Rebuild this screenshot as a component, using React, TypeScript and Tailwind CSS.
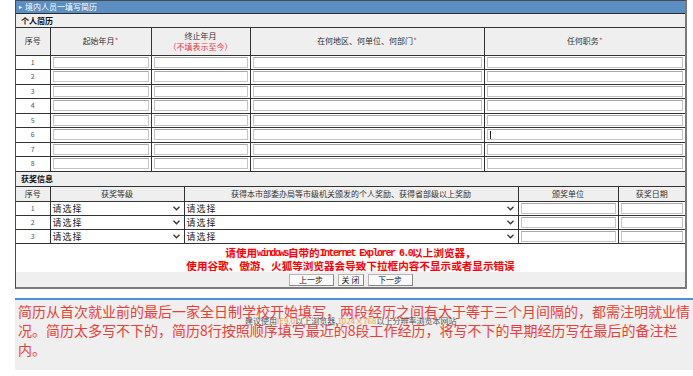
import React from "react";

const resumeRows = [1, 2, 3, 4, 5, 6, 7, 8];
const awardRows = [1, 2, 3];

function Field() {
  return <div className="h-[11px] w-full border border-[#c4c4c4] border-t-[#a8a8a8] bg-white" />;
}

function Chevron() {
  return (
    <svg width="7" height="5" viewBox="0 0 7 5" className="shrink-0">
      <path d="M0.5 0.8 L3.5 3.8 L6.5 0.8" fill="none" stroke="#333" strokeWidth="1.3" />
    </svg>
  );
}

function FakeSelect() {
  return (
    <div className="flex h-[12px] w-full items-center justify-between bg-white pl-[1px] pr-[2px] text-[9px] leading-none tracking-[1px] text-[#222]">
      <span>请选择</span>
      <Chevron />
    </div>
  );
}

export default function App() {
  return (
    <div className="relative h-[376px] w-[693px] overflow-hidden bg-white font-['Noto_Sans_CJK_SC',sans-serif]">
      {/* form frame */}
      <div className="ml-[15px] w-[672px] border border-[#4a4a4a] border-r-2 border-r-[#7a7a7a] border-b-2 border-b-[#7a7a7a]">
        <div className="flex h-[13px] items-center gap-[3px] border-b border-[#2d2d2d] bg-[#5b8ec3] pl-[3px] text-[8px] leading-none text-white">
          <span className="text-[6px]">▸</span>
          <span>境内人员一填写简历</span>
        </div>

        <div className="flex h-[14px] items-center border-b border-[#333] bg-[#efefef] pl-[5px] text-[8px] font-bold leading-none text-[#111]">
          个人简历
        </div>

        <table className="w-full table-fixed border-collapse text-[8px] leading-none text-[#333]">
          <colgroup>
            <col className="w-[34px]" />
            <col className="w-[101px]" />
            <col className="w-[99px]" />
            <col className="w-[234px]" />
            <col />
          </colgroup>
          <thead>
            <tr className="h-[27px] bg-[#efefef]">
              <th className="border-r border-b border-[#333] font-normal">序号</th>
              <th className="border-r border-b border-[#333] font-normal">
                起始年月<span className="text-[#ff3355]">*</span>
              </th>
              <th className="border-r border-b border-[#333] font-normal">
                <div>终止年月</div>
                <div className="mt-[3px] text-[#e8383d]">（不填表示至今）</div>
              </th>
              <th className="border-r border-b border-[#333] font-normal">
                在何地区、何单位、何部门<span className="text-[#ff3355]">*</span>
              </th>
              <th className="border-b border-[#333] font-normal">
                任何职务<span className="text-[#ff3355]">*</span>
              </th>
            </tr>
          </thead>
          <tbody>
            {resumeRows.map((n) => (
              <tr key={n} className="h-[14.5px]">
                <td className="border-r border-b border-[#333] text-center text-[7px] text-[#555]">{n}</td>
                <td className="border-r border-b border-[#333] px-[2px]"><Field /></td>
                <td className="border-r border-b border-[#333] px-[2px]"><Field /></td>
                <td className="border-r border-b border-[#333] px-[2px]"><Field /></td>
                <td className="border-b border-[#333] px-[2px]">
                  {n === 6 ? (
                    <div className="flex h-[11px] w-full items-center border border-[#c4c4c4] border-t-[#a8a8a8] bg-white pl-[2px]">
                      <div className="h-[8px] w-px bg-[#222]" />
                    </div>
                  ) : (
                    <Field />
                  )}
                </td>
              </tr>
            ))}
          </tbody>
        </table>

        <div className="flex h-[15px] items-center border-b border-[#333] bg-[#efefef] pl-[5px] text-[8px] font-bold leading-none text-[#111]">
          获奖信息
        </div>

        <table className="w-full table-fixed border-collapse text-[8px] leading-none text-[#333]">
          <colgroup>
            <col className="w-[34px]" />
            <col className="w-[134px]" />
            <col className="w-[334px]" />
            <col className="w-[100px]" />
            <col />
          </colgroup>
          <thead>
            <tr className="h-[15px] bg-[#efefef]">
              <th className="border-r border-b border-[#333] font-normal">序号</th>
              <th className="border-r border-b border-[#333] font-normal">获奖等级</th>
              <th className="border-r border-b border-[#333] font-normal">
                获得本市部委办局等市级机关颁发的个人奖励、获得省部级以上奖励
              </th>
              <th className="border-r border-b border-[#333] font-normal">颁奖单位</th>
              <th className="border-b border-[#333] font-normal">获奖日期</th>
            </tr>
          </thead>
          <tbody>
            {awardRows.map((n) => (
              <tr key={n} className="h-[14px]">
                <td className="border-r border-b border-[#333] text-center text-[7px] text-[#555]">{n}</td>
                <td className="border-r border-b border-[#333] pl-[1px] pr-[2px]"><FakeSelect /></td>
                <td className="border-r border-b border-[#333] pl-[1px] pr-[2px]"><FakeSelect /></td>
                <td className="border-r border-b border-[#333] px-[2px]"><Field /></td>
                <td className="border-b border-[#333] px-[2px]"><Field /></td>
              </tr>
            ))}
          </tbody>
        </table>

        {/* browser warning */}
        <div className="bg-white pt-[3px] text-center text-[10.6px] font-bold text-[#ff0000]">
          <div className="flex h-[13px] items-center justify-center leading-none">
            请使用
            <span className="font-['Liberation_Mono',monospace] text-[10px] leading-none tracking-[-1.6px]">windows</span>
            自带的
            <span className="font-['Liberation_Mono',monospace] text-[10px] leading-none tracking-[-1.6px]">Internet Explorer 6.0</span>
            以上浏览器，
          </div>
          <div className="flex h-[12px] items-center justify-center leading-none">
            使用谷歌、傲游、火狐等浏览器会导致下拉框内容不显示或者显示错误
          </div>
        </div>

        <div className="flex h-[15px] items-center justify-center gap-[4px] bg-[#efefef] text-[8px] leading-none text-[#222]">
          <button className="h-[12px] w-[45px] border border-[#b5b5b5] border-b-[#888] border-r-[#888] bg-[#fafafa]">上一步</button>
          <button className="h-[12px] w-[26px] border border-[#b5b5b5] border-b-[#888] border-r-[#888] bg-[#fafafa]">关 闭</button>
          <button className="h-[12px] w-[45px] border border-[#b5b5b5] border-b-[#888] border-r-[#888] bg-[#fafafa]">下一步</button>
        </div>
      </div>

      {/* note panel */}
      <div className="relative ml-[15px] mt-[9px] h-[72px] border-t-2 border-[#4f8fdc] bg-[#efefef] pl-[3px] pt-[2px] text-[14px] leading-[19px] whitespace-nowrap text-[#ec3e36]">
        <div>简历从首次就业前的最后一家全日制学校开始填写，两段经历之间有大于等于三个月间隔的，都需注明就业情</div>
        <div>况。简历太多写不下的，简历8行按照顺序填写最近的8段工作经历，将写不下的早期经历写在最后的备注栏</div>
        <div>内。</div>
        <div className="absolute left-[230px] top-[16px] text-[8px] leading-[10px] text-[#555]">
          建议使用<span className="text-[#f0a040]">IE9.0</span>以上浏览器,<span className="text-[#f0a040]">1024×768</span>以上分辨率浏览本网站
        </div>
      </div>
    </div>
  );
}
